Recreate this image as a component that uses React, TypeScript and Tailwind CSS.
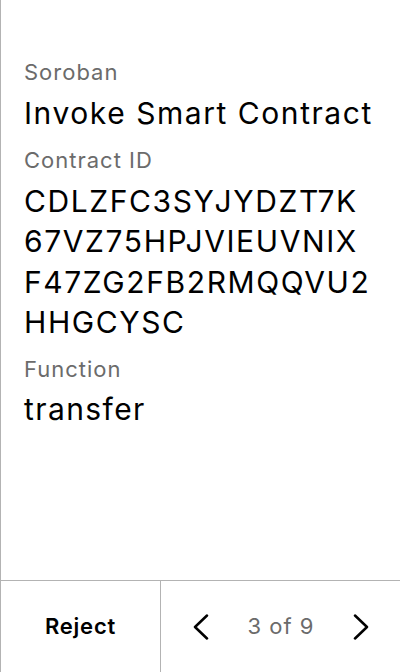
const font = { fontFamily: 'Inter, "Noto Sans", sans-serif' };

const contractId = ['CDLZFC3SYJYDZT7K', '67VZ75HPJVIEUVNIX', 'F47ZG2FB2RMQQVU2', 'HHGCYSC'];

function Chevron({ dir }: { dir: 'left' | 'right' }) {
  return (
    <svg width="16" height="26" viewBox="0 0 16 26" fill="none">
      <polyline
        points={dir === 'left' ? '14,1.5 2,13 14,24.5' : '2,1.5 14,13 2,24.5'}
        stroke="#000"
        strokeWidth="2.5"
        strokeLinecap="round"
        strokeLinejoin="round"
      />
    </svg>
  );
}

export default function App() {
  return (
    <div
      className="w-[400px] h-[672px] flex flex-col bg-white border-l border-[#b3b3b3] text-black"
      style={font}
    >
      <div className="flex-1 px-[23px] pt-[57px]">
        <div className="text-[22px] leading-[30px] tracking-[1px] text-[#6b6b6b]">Soroban</div>
        <div className="mt-[6px] text-[30px] leading-[40px] tracking-[1.55px]">Invoke Smart Contract</div>

        <div className="mt-[12px] text-[22px] leading-[30px] tracking-[1px] text-[#6b6b6b]">Contract ID</div>
        <div className="mt-[6px] text-[30px] leading-[40.4px] tracking-[1.6px]">
          {contractId.map((line) => (
            <div key={line}>{line}</div>
          ))}
        </div>

        <div className="mt-[11px] text-[22px] leading-[30px] tracking-[1px] text-[#6b6b6b]">Function</div>
        <div className="mt-[5px] text-[30px] leading-[40px] tracking-[1.4px]">transfer</div>
      </div>

      <div className="h-[92px] flex border-t border-[#b3b3b3]">
        <button className="w-[159px] flex items-center justify-center text-[22px] tracking-[0.8px] font-semibold">
          Reject
        </button>
        <div className="flex-1 flex items-center justify-between pl-[32px] pr-[31px] border-l border-[#b3b3b3]">
          <Chevron dir="left" />
          <span className="text-[22px] tracking-[1px] text-[#6b6b6b]">3 of 9</span>
          <Chevron dir="right" />
        </div>
      </div>
    </div>
  );
}
